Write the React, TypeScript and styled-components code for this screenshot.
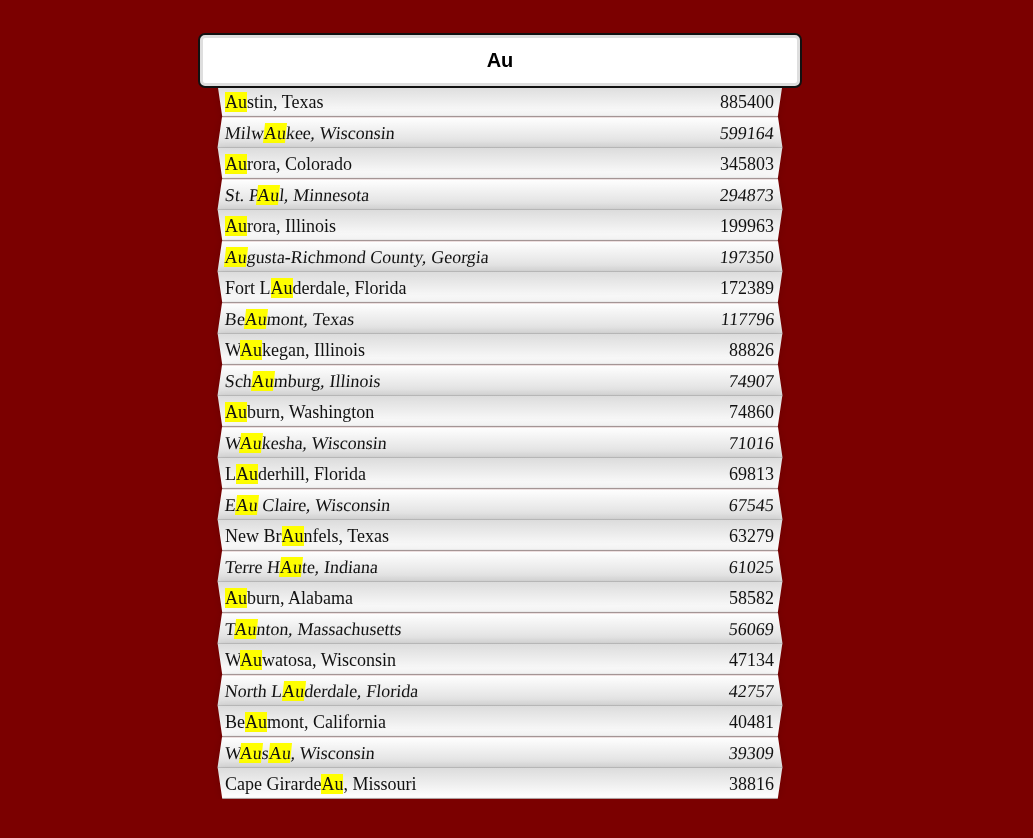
import { useState } from 'react'
import styled, { createGlobalStyle } from 'styled-components'

const GlobalStyle = createGlobalStyle`
  html, body {
    margin: 0;
    padding: 0;
    background: #7b0000;
  }
  * {
    box-sizing: border-box;
  }
`

const SearchForm = styled.form`
  width: 560px;
  margin: 35px 0 0 220px;
`

const SearchInput = styled.input`
  position: relative;
  z-index: 2;
  display: block;
  width: 600px;
  height: 51px;
  margin: 0 0 0 -20px;
  padding: 0;
  border: 3px solid #dedede;
  border-radius: 5px;
  outline: none;
  box-shadow: 0 0 0 2px #111;
  background: #fff;
  color: #000;
  text-align: center;
  font-family: 'Liberation Sans', Arial, sans-serif;
  font-size: 20px;
  font-weight: bold;
  caret-color: #000;
`

const Suggestions = styled.ul`
  position: relative;
  margin: 0;
  padding: 0;
  list-style: none;
`

// the trapezoid card sits behind the text so the text itself stays flat
const Row = styled.li<{ $odd: boolean }>`
  position: relative;
  z-index: 0;
  display: flex;
  justify-content: space-between;
  height: 31px;
  margin: 0;
  padding: 6px 6px 5px 5px;
  font-family: 'Liberation Serif', 'Times New Roman', serif;
  font-size: 18px;
  line-height: 20px;
  color: #111;
  text-transform: capitalize;

  &::before {
    content: '';
    position: absolute;
    inset: 0;
    z-index: -1;
    border-bottom: 1px solid #b9b9b9;
    box-shadow: 0 0 10px rgba(0, 0, 0, 0.14);
    background: ${p =>
      p.$odd
        ? 'linear-gradient(to bottom, #ffffff 0%, #dcdcdc 100%)'
        : 'linear-gradient(to top, #ffffff 0%, #dcdcdc 100%)'};
    transform: ${p =>
      p.$odd
        ? 'perspective(100px) rotateX(3deg) scale(1.001)'
        : 'perspective(100px) rotateX(-3deg)'};
  }
`

const Text = styled.span<{ $odd: boolean }>`
  display: inline-block;
  transform: ${p => (p.$odd ? 'skewX(-6deg)' : 'none')};
`

const Hl = styled.span`
  background: #ffff00;
`

type City = { city: string; state: string; population: number }

const cities: City[] = [
  { city: 'austin', state: 'Texas', population: 885400 },
  { city: 'milwaukee', state: 'Wisconsin', population: 599164 },
  { city: 'aurora', state: 'Colorado', population: 345803 },
  { city: 'st. paul', state: 'Minnesota', population: 294873 },
  { city: 'aurora', state: 'Illinois', population: 199963 },
  { city: 'augusta-Richmond County', state: 'Georgia', population: 197350 },
  { city: 'fort lauderdale', state: 'Florida', population: 172389 },
  { city: 'beaumont', state: 'Texas', population: 117796 },
  { city: 'waukegan', state: 'Illinois', population: 88826 },
  { city: 'schaumburg', state: 'Illinois', population: 74907 },
  { city: 'auburn', state: 'Washington', population: 74860 },
  { city: 'waukesha', state: 'Wisconsin', population: 71016 },
  { city: 'lauderhill', state: 'Florida', population: 69813 },
  { city: 'eau claire', state: 'Wisconsin', population: 67545 },
  { city: 'new braunfels', state: 'Texas', population: 63279 },
  { city: 'terre haute', state: 'Indiana', population: 61025 },
  { city: 'auburn', state: 'Alabama', population: 58582 },
  { city: 'taunton', state: 'Massachusetts', population: 56069 },
  { city: 'wauwatosa', state: 'Wisconsin', population: 47134 },
  { city: 'north lauderdale', state: 'Florida', population: 42757 },
  { city: 'beaumont', state: 'California', population: 40481 },
  { city: 'wausau', state: 'Wisconsin', population: 39309 },
  { city: 'cape girardeau', state: 'Missouri', population: 38816 },
]

const highlight = (text: string, query: string) => {
  if (!query) return text
  const re = new RegExp(query, 'gi')
  return text.split(re).flatMap((part, i, arr) =>
    i < arr.length - 1 ? [part, <Hl key={i}>{query}</Hl>] : [part]
  )
}

const App = () => {
  const [query, setQuery] = useState('Au')
  const re = new RegExp(query, 'i')
  const matches = cities.filter(c => re.test(c.city) || re.test(c.state))

  return (
    <>
      <GlobalStyle />
      <SearchForm onSubmit={e => e.preventDefault()}>
        <SearchInput autoFocus value={query} onChange={e => setQuery(e.target.value)} />
        <Suggestions>
          {matches.map((c, i) => {
            const odd = i % 2 === 1
            return (
              <Row key={c.city + c.state} $odd={odd}>
                <Text $odd={odd}>{highlight(`${c.city}, ${c.state}`, query)}</Text>
                <Text $odd={odd}>{c.population}</Text>
              </Row>
            )
          })}
        </Suggestions>
      </SearchForm>
    </>
  )
}

export default App
